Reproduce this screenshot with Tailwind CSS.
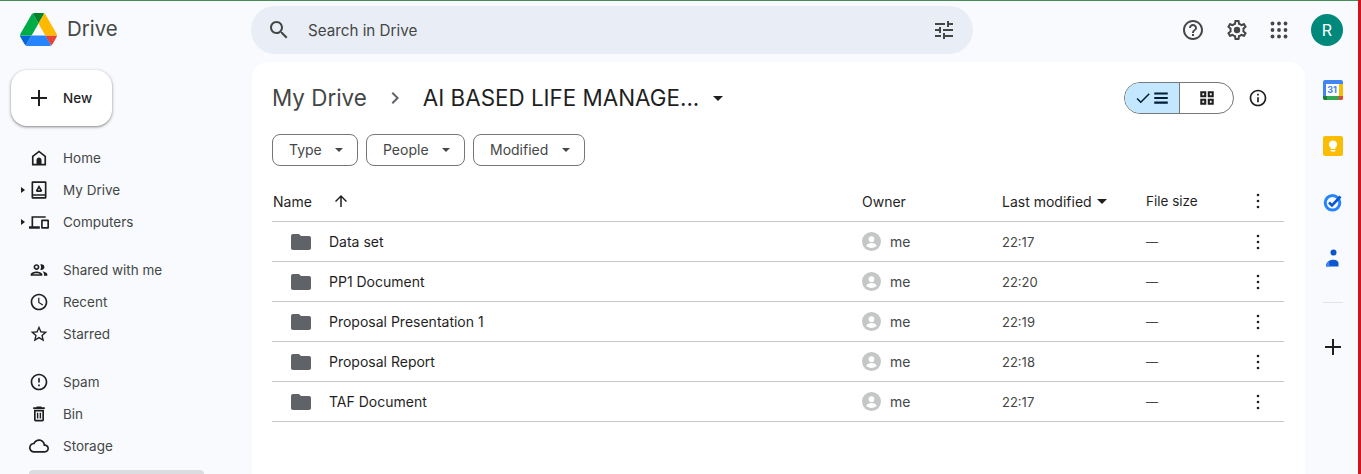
<!DOCTYPE html>
<html lang="en">
<head>
    <meta charset="UTF-8">
    <title>My Drive - Google Drive</title>
    <script src="https://cdn.jsdelivr.net/npm/@tailwindcss/browser@4"></script>
</head>
<body class="w-[1361px] h-[474px] overflow-hidden bg-[#f8fafd] font-[Inter,sans-serif] text-sm text-[#444746]">
    <!-- top green line -->
    <div class="h-px bg-[#4a8a5a]"></div>

    <div class="flex h-[473px]">
        <!-- left sidebar -->
        <aside class="w-[252px] shrink-0 text-[13.5px]">
            <div class="flex items-center h-[33px] mt-3 ml-5">
                <svg class="w-[37px] h-[33px]" viewBox="0 0 87.3 78">
                    <path d="m6.6 66.85 3.85 6.65c.8 1.4 1.95 2.5 3.3 3.3l13.75-23.8h-27.5c0 1.55.4 3.1 1.2 4.5z" fill="#0066da"/>
                    <path d="m43.65 25-13.75-23.8c-1.35.8-2.5 1.9-3.3 3.3l-25.4 44a9.06 9.06 0 0 0 -1.2 4.5h27.5z" fill="#00ac47"/>
                    <path d="m73.55 76.8c1.35-.8 2.5-1.9 3.3-3.3l1.6-2.75 7.65-13.25c.8-1.4 1.2-2.95 1.2-4.5h-27.502l5.852 11.5z" fill="#ea4335"/>
                    <path d="m43.65 25 13.75-23.8c-1.35-.8-2.9-1.2-4.5-1.2h-18.5c-1.6 0-3.15.45-4.5 1.2z" fill="#00832d"/>
                    <path d="m59.8 53h-32.3l-13.75 23.8c1.35.8 2.9 1.2 4.5 1.2h50.8c1.6 0 3.15-.45 4.5-1.2z" fill="#2684fc"/>
                    <path d="m73.4 26.5-12.7-22c-.8-1.4-1.95-2.5-3.3-3.3l-13.75 23.8 16.15 28h27.45c0-1.55-.4-3.1-1.2-4.5z" fill="#ffba00"/>
                </svg>
                <span class="ml-[10px] text-[20.4px] leading-none text-[#444746]">Drive</span>
            </div>

            <button class="flex items-center w-[101px] h-14 mt-6 ml-[11px] rounded-2xl bg-white shadow-[0_1px_3px_1px_rgba(0,0,0,0.15),0_1px_2px_rgba(0,0,0,0.3)]">
                <svg class="w-6 h-6 ml-4 fill-[#1f1f1f]" viewBox="0 0 24 24"><path d="M20 13h-7v7h-2v-7H4v-2h7V4h2v7h7v2z"/></svg>
                <span class="ml-3 pt-[2px] font-medium text-[#1f1f1f]">New</span>
            </button>

            <nav class="mt-4 ml-5 [&>div>span:last-child]:pt-[2px]">
                <div class="flex items-center h-8">
                    <span class="w-[9px]"></span>
                    <svg class="w-5 h-5 mr-[14px] fill-[#1f1f1f]" viewBox="0 0 24 24"><path d="M12 3 3.500 9.500V21h17V9.500L12 3zm6.500 16H15v-4.500c0-1.700-1.300-3-3-3s-3 1.300-3 3V19H5.500v-8.500L12 5.500l6.500 5V19z"/></svg>
                    <span>Home</span>
                </div>
                <div class="flex items-center h-8">
                    <span class="w-[9px]"><span class="block w-0 h-0 ml-px border-y-[3.500px] border-y-transparent border-l-[4px] border-l-[#1f1f1f]"></span></span>
                    <svg class="w-5 h-5 mr-[14px] fill-[#1f1f1f]" viewBox="0 0 24 24"><path d="M4.500 1.500h15c.8 0 1.500.7 1.500 1.500v18c0 .8-.7 1.500-1.500 1.500h-15C3.700 22.500 3 21.800 3 21V3c0-.8.7-1.500 1.500-1.500zM5 3.500V17h14V3.500H5zM5 19v1.500h14V19H5z"/><path d="m12 6 3.800 6.500-1 2H9.200l-1-2L12 6zm0 4-1.200 2.300h2.400L12 10z"/></svg>
                    <span>My Drive</span>
                </div>
                <div class="flex items-center h-8">
                    <span class="w-[9px]"><span class="block w-0 h-0 ml-px border-y-[3.500px] border-y-transparent border-l-[4px] border-l-[#1f1f1f]"></span></span>
                    <svg class="w-5 h-5 mr-[14px] fill-[#1f1f1f]" viewBox="0 0 24 24"><path d="M3 5h17v2H5v10h8v3H0v-3h3V5z"/><path d="M16 9h6.500c.8 0 1.500.7 1.500 1.500v8c0 .8-.7 1.500-1.500 1.500H16c-.8 0-1.500-.7-1.500-1.500v-8c0-.8.7-1.500 1.500-1.500zm.5 2v7H22v-7h-5.500z"/></svg>
                    <span>Computers</span>
                </div>

                <div class="flex items-center h-8 mt-4">
                    <span class="w-[9px]"></span>
                    <svg class="w-5 h-5 mr-[14px] fill-[#1f1f1f]" viewBox="0 0 24 24"><path d="M9 13.750c-2.340 0-7 1.170-7 3.500V19h14v-1.750c0-2.330-4.660-3.500-7-3.500zM4.340 17c.84-.58 2.870-1.250 4.660-1.250s3.820.67 4.660 1.250H4.340zM9 12c1.930 0 3.500-1.570 3.500-3.500S10.930 5 9 5 5.500 6.570 5.500 8.500 7.070 12 9 12zm0-5c.83 0 1.500.67 1.500 1.500S9.830 10 9 10s-1.500-.67-1.500-1.500S8.170 7 9 7zm7.040 6.810c1.160.84 1.960 1.960 1.960 3.440V19h4v-1.750c0-2.020-3.500-3.170-5.960-3.440zM15 12c1.930 0 3.500-1.570 3.500-3.500S16.930 5 15 5c-.54 0-1.040.13-1.500.35.630.89 1 1.980 1 3.150s-.37 2.260-1 3.150c.46.220.96.350 1.500.350z"/></svg>
                    <span>Shared with me</span>
                </div>
                <div class="flex items-center h-8">
                    <span class="w-[9px]"></span>
                    <svg class="w-5 h-5 mr-[14px] fill-[#1f1f1f]" viewBox="0 0 24 24"><path d="M11.990 2C6.470 2 2 6.480 2 12s4.470 10 9.990 10C17.520 22 22 17.520 22 12S17.520 2 11.990 2zM12 20c-4.420 0-8-3.580-8-8s3.580-8 8-8 8 3.580 8 8-3.580 8-8 8zm.500-13H11v6l5.250 3.150.750-1.230-4.500-2.670z"/></svg>
                    <span>Recent</span>
                </div>
                <div class="flex items-center h-8">
                    <span class="w-[9px]"></span>
                    <svg class="w-5 h-5 mr-[14px] fill-[#1f1f1f]" viewBox="0 0 24 24"><path d="M22 9.240l-7.190-.62L12 2 9.190 8.630 2 9.240l5.460 4.730L5.820 21 12 17.270 18.180 21l-1.630-7.030L22 9.240zM12 15.400l-3.760 2.270 1-4.280-3.320-2.880 4.380-.38L12 6.100l1.710 4.040 4.380.38-3.320 2.880 1 4.280L12 15.400z"/></svg>
                    <span>Starred</span>
                </div>

                <div class="flex items-center h-8 mt-4">
                    <span class="w-[9px]"></span>
                    <svg class="w-5 h-5 mr-[14px] fill-[#1f1f1f]" viewBox="0 0 24 24"><path d="M12 7c.55 0 1 .45 1 1v4c0 .55-.45 1-1 1s-1-.45-1-1V8c0-.55.45-1 1-1zm-.01-5C6.470 2 2 6.480 2 12s4.470 10 9.990 10C17.520 22 22 17.520 22 12S17.520 2 11.990 2zM12 20c-4.420 0-8-3.580-8-8s3.580-8 8-8 8 3.580 8 8-3.580 8-8 8zm1-3h-2v-2h2v2z"/></svg>
                    <span>Spam</span>
                </div>
                <div class="flex items-center h-8">
                    <span class="w-[9px]"></span>
                    <svg class="w-5 h-5 mr-[14px] fill-[#1f1f1f]" viewBox="0 0 24 24"><path d="M6 19c0 1.100.9 2 2 2h8c1.100 0 2-.9 2-2V7H6v12zM8 9h8v10H8V9zm7.500-5l-1-1h-5l-1 1H5v2h14V4z"/><path d="M9.500 10.500h1.700v7H9.500zM12.800 10.500h1.700v7h-1.700z"/></svg>
                    <span>Bin</span>
                </div>
                <div class="flex items-center h-8">
                    <span class="w-[9px]"></span>
                    <svg class="w-5 h-5 mr-[14px] fill-[#1f1f1f]" viewBox="0 0 24 24"><path d="M19.350 10.040C18.670 6.590 15.640 4 12 4 9.110 4 6.600 5.640 5.350 8.040 2.340 8.360 0 10.910 0 14c0 3.310 2.690 6 6 6h13c2.760 0 5-2.240 5-5 0-2.640-2.050-4.780-4.650-4.960zM19 18H6c-2.210 0-4-1.790-4-4s1.790-4 4-4h.71C7.370 7.690 9.480 6 12 6c3.040 0 5.500 2.460 5.500 5.500v.5H19c1.660 0 3 1.340 3 3s-1.340 3-3 3z"/></svg>
                    <span>Storage</span>
                </div>
            </nav>
            <div class="w-[175px] h-2 mt-2 ml-[29px] rounded bg-[#dadce0]"></div>
        </aside>

        <!-- header + content -->
        <div class="w-[1106px] shrink-0">
            <header class="flex items-center h-[61px] pb-[8px] pt-[5px]">
                <div class="flex items-center w-[722px] h-12 -ml-px rounded-full bg-[#e9eef6]">
                    <svg class="w-6 h-6 ml-4 fill-[#444746]" viewBox="0 0 24 24"><path d="M15.500 14h-.79l-.28-.27C15.410 12.590 16 11.110 16 9.500 16 5.910 13.090 3 9.500 3S3 5.910 3 9.500 5.910 16 9.500 16c1.610 0 3.090-.59 4.230-1.570l.27.28v.79l5 4.990L20.490 19l-4.990-5zm-6 0C7.010 14 5 11.990 5 9.500S7.010 5 9.500 5 14 7.010 14 9.500 11.990 14 9.500 14z"/></svg>
                    <span class="ml-[17px] pt-[2px] text-[15.2px] text-[#444746]">Search in Drive</span>
                    <svg class="w-6 h-6 ml-auto mr-[17px] fill-[#444746]" viewBox="0 0 24 24"><path d="M3 17v2h6v-2H3zM3 5v2h10V5H3zm10 16v-2h8v-2h-8v-2h-2v6h2zM7 9v2H3v2h4v2h2V9H7zm14 4v-2H11v2h10zm-6-4h2V7h4V5h-4V3h-2v6z"/></svg>
                </div>
                <svg class="w-6 h-6 ml-[208px] fill-[#444746]" viewBox="0 0 24 24"><path d="M11 18h2v-2h-2v2zm1-16C6.480 2 2 6.480 2 12s4.480 10 10 10 10-4.480 10-10S17.520 2 12 2zm0 18c-4.410 0-8-3.590-8-8s3.590-8 8-8 8 3.590 8 8-3.590 8-8 8zm0-14c-2.210 0-4 1.790-4 4h2c0-1.100.9-2 2-2s2 .9 2 2c0 2-3 1.750-3 5h2c0-2.250 3-2.500 3-5 0-2.210-1.790-4-4-4z"/></svg>
                <svg class="w-6 h-6 ml-5 fill-[#444746]" viewBox="0 0 24 24"><path d="M19.430 12.980c.04-.32.07-.64.07-.98 0-.34-.03-.66-.07-.98l2.110-1.650c.19-.15.24-.42.12-.64l-2-3.460c-.09-.16-.26-.25-.44-.25-.06 0-.12.01-.17.03l-2.490 1c-.52-.4-1.080-.73-1.690-.98l-.38-2.650C14.460 2.180 14.250 2 14 2h-4c-.25 0-.46.18-.49.42l-.38 2.650c-.61.25-1.170.59-1.690.98l-2.490-1c-.06-.02-.12-.03-.18-.03-.17 0-.34.09-.43.25l-2 3.460c-.13.22-.07.49.12.64l2.110 1.650c-.04.32-.07.65-.07.98 0 .33.03.66.07.98l-2.110 1.650c-.19.15-.24.42-.12.64l2 3.460c.09.16.26.25.44.25.06 0 .12-.01.17-.03l2.490-1c.52.4 1.080.73 1.690.98l.38 2.650c.03.24.24.42.49.42h4c.25 0 .46-.18.49-.42l.38-2.650c.61-.25 1.170-.59 1.690-.98l2.490 1c.06.02.12.03.18.03.17 0 .34-.09.43-.25l2-3.460c.12-.22.07-.49-.12-.64l-2.110-1.650zm-1.980-1.710c.04.31.05.52.05.73 0 .21-.02.43-.05.73l-.14 1.130.89.7 1.080.84-.7 1.210-1.270-.51-1.040-.42-.9.68c-.43.32-.84.56-1.250.73l-1.060.43-.16 1.130-.2 1.350h-1.400l-.19-1.350-.16-1.130-1.060-.43c-.43-.18-.83-.41-1.230-.71l-.91-.7-1.060.43-1.270.51-.7-1.210 1.080-.84.89-.7-.14-1.130c-.03-.31-.05-.54-.05-.74s.02-.43.05-.73l.14-1.130-.89-.7-1.080-.84.7-1.210 1.270.51 1.040.42.9-.68c.43-.32.84-.56 1.250-.73l1.060-.43.16-1.130.2-1.350h1.390l.19 1.350.16 1.130 1.060.43c.43.18.83.41 1.230.71l.91.7 1.060-.43 1.270-.51.7 1.210-1.070.85-.89.7.14 1.130z"/><circle cx="12" cy="12" r="3.200"/></svg>
                <svg class="w-6 h-6 ml-[18px] fill-[#444746]" viewBox="0 0 24 24"><circle cx="5.500" cy="5.500" r="1.900"/><circle cx="12" cy="5.500" r="1.900"/><circle cx="18.500" cy="5.500" r="1.900"/><circle cx="5.500" cy="12" r="1.900"/><circle cx="12" cy="12" r="1.900"/><circle cx="18.500" cy="12" r="1.900"/><circle cx="5.500" cy="18.500" r="1.900"/><circle cx="12" cy="18.500" r="1.900"/><circle cx="18.500" cy="18.500" r="1.900"/></svg>
                <div class="flex items-center justify-center w-8 h-8 ml-5 rounded-full bg-[#00897b] text-white text-base">R</div>
            </header>

            <div class="flex h-[412px]">
                <!-- main card -->
                <main class="w-[1053px] shrink-0 px-5 rounded-t-2xl bg-white">
                    <div class="flex items-center h-[72px]">
                        <span class="text-[22.4px] text-[#444746]">My Drive</span>
                        <svg class="w-6 h-6 ml-4 fill-[#5f6368]" viewBox="0 0 24 24"><path d="M10 6 8.590 7.410 13.170 12l-4.580 4.590L10 18l6-6z"/></svg>
                        <span class="ml-4 text-[22.4px] text-[#1f1f1f]">AI BASED LIFE MANAGE...</span>
                        <span class="ml-[14px] w-0 h-0 border-x-[5px] border-x-transparent border-t-[5px] border-t-[#1f1f1f]"></span>
                        <div class="flex ml-auto h-8 w-[110px] rounded-full border border-[#747775] overflow-hidden">
                            <div class="flex items-center justify-center w-[55px] bg-[#c2e7ff] border-r border-[#747775]">
                                <svg class="w-[18px] h-[18px] fill-[#001d35]" viewBox="0 0 24 24"><path d="M9 16.170 4.830 12l-1.420 1.410L9 19 21 7l-1.410-1.410z"/></svg>
                                <svg class="w-[18px] h-[18px] fill-[#001d35]" viewBox="0 0 24 24"><path d="M3 4.500h18v2.800H3zM3 10.600h18v2.800H3zM3 16.700h18v2.800H3z"/></svg>
                            </div>
                            <div class="flex items-center justify-center flex-1">
                                <svg class="w-[18px] h-[18px] fill-[#1f1f1f]" viewBox="0 0 24 24"><path fill-rule="evenodd" d="M3 3h8v8H3zm2.800 2.800v2.400h2.400V5.800zM13 3h8v8h-8zm2.800 2.800v2.400h2.400V5.800zM3 13h8v8H3zm2.800 2.800v2.400h2.400v-2.400zM13 13h8v8h-8zm2.800 2.800v2.400h2.400v-2.400z"/></svg>
                            </div>
                        </div>
                        <svg class="w-5 h-5 ml-[14px] mr-[17px] fill-[#1f1f1f]" viewBox="0 0 24 24"><path d="M11 7h2v2h-2zm0 4h2v6h-2zm1-9C6.480 2 2 6.480 2 12s4.480 10 10 10 10-4.480 10-10S17.520 2 12 2zm0 18c-4.410 0-8-3.590-8-8s3.590-8 8-8 8 3.590 8 8-3.590 8-8 8z"/></svg>
                    </div>

                    <div class="flex gap-2">
                        <button class="flex items-center justify-between w-[86px] h-8 pl-4 pr-[14px] rounded-lg border border-[#747775]">Type<span class="w-0 h-0 border-x-[4px] border-x-transparent border-t-[4px] border-t-[#444746]"></span></button>
                        <button class="flex items-center justify-between w-[99px] h-8 pl-4 pr-[14px] rounded-lg border border-[#747775]">People<span class="w-0 h-0 border-x-[4px] border-x-transparent border-t-[4px] border-t-[#444746]"></span></button>
                        <button class="flex items-center justify-between w-[112px] h-8 pl-4 pr-[14px] rounded-lg border border-[#747775]">Modified<span class="w-0 h-0 border-x-[4px] border-x-transparent border-t-[4px] border-t-[#444746]"></span></button>
                    </div>

                    <!-- file table -->
                    <div class="mt-4 w-[1012px]">
                        <div class="grid grid-cols-[590px_140px_144px_100px_38px] items-center h-10 border-b border-[#c7c7c7] text-[#1f1f1f]">
                            <div class="flex items-center pl-px">Name
                                <svg class="w-[18px] h-[18px] ml-5 -mt-[2px] fill-[#1f1f1f]" viewBox="0 0 24 24"><path d="M4 12l1.410 1.410L11 7.830V20h2V7.830l5.580 5.590L20 12l-8-8-8 8z"/></svg>
                            </div>
                            <div>Owner</div>
                            <div class="flex items-center">Last modified<span class="ml-[5px] w-0 h-0 border-x-[5px] border-x-transparent border-t-[5px] border-t-[#1f1f1f]"></span></div>
                            <div class="text-[13.5px]">File size</div>
                            <svg class="w-6 h-6 -mt-[1px] fill-[#1f1f1f]" viewBox="0 0 24 24"><circle cx="12" cy="6" r="1.300"/><circle cx="12" cy="12" r="1.300"/><circle cx="12" cy="18" r="1.300"/></svg>
                        </div>

                        <div class="grid grid-cols-[590px_140px_144px_100px_38px] items-center h-10 border-b border-[#c7c7c7]">
                            <div class="flex items-center pl-[17px] gap-4 text-[#1f1f1f]">
                                <svg class="w-6 h-6 fill-[#5f6368]" viewBox="0 0 24 24"><path d="M10 4H4c-1.100 0-1.990.9-1.990 2L2 18c0 1.100.9 2 2 2h16c1.100 0 2-.9 2-2V8c0-1.100-.9-2-2-2h-8l-2-2z"/></svg>
                                Data set
                            </div>
                            <div class="flex items-center gap-[9px]">
                                <svg class="w-[19px] h-[19px]" viewBox="0 0 20 20"><circle cx="10" cy="10" r="10" fill="#c4c7c5"/><circle cx="10" cy="7.500" r="3" fill="#fff"/><path d="M4.500 14.500c.8-2.200 3-3 5.500-3s4.700.8 5.500 3c-1.300 1.400-3.300 2.300-5.500 2.300s-4.200-.9-5.500-2.300z" fill="#fff"/></svg>
                                me
                            </div>
                            <div class="pt-[2px] text-[13px]">22:17</div>
                            <div class="text-xs">—</div>
                            <svg class="w-6 h-6 fill-[#1f1f1f]" viewBox="0 0 24 24"><circle cx="12" cy="6" r="1.300"/><circle cx="12" cy="12" r="1.300"/><circle cx="12" cy="18" r="1.300"/></svg>
                        </div>
                        <div class="grid grid-cols-[590px_140px_144px_100px_38px] items-center h-10 border-b border-[#c7c7c7]">
                            <div class="flex items-center pl-[17px] gap-4 text-[#1f1f1f]">
                                <svg class="w-6 h-6 fill-[#5f6368]" viewBox="0 0 24 24"><path d="M10 4H4c-1.100 0-1.990.9-1.990 2L2 18c0 1.100.9 2 2 2h16c1.100 0 2-.9 2-2V8c0-1.100-.9-2-2-2h-8l-2-2z"/></svg>
                                PP1 Document
                            </div>
                            <div class="flex items-center gap-[9px]">
                                <svg class="w-[19px] h-[19px]" viewBox="0 0 20 20"><circle cx="10" cy="10" r="10" fill="#c4c7c5"/><circle cx="10" cy="7.500" r="3" fill="#fff"/><path d="M4.500 14.500c.8-2.200 3-3 5.500-3s4.700.8 5.500 3c-1.300 1.400-3.300 2.300-5.500 2.300s-4.200-.9-5.500-2.300z" fill="#fff"/></svg>
                                me
                            </div>
                            <div class="pt-[2px] text-[13px]">22:20</div>
                            <div class="text-xs">—</div>
                            <svg class="w-6 h-6 fill-[#1f1f1f]" viewBox="0 0 24 24"><circle cx="12" cy="6" r="1.300"/><circle cx="12" cy="12" r="1.300"/><circle cx="12" cy="18" r="1.300"/></svg>
                        </div>
                        <div class="grid grid-cols-[590px_140px_144px_100px_38px] items-center h-10 border-b border-[#c7c7c7]">
                            <div class="flex items-center pl-[17px] gap-4 text-[#1f1f1f]">
                                <svg class="w-6 h-6 fill-[#5f6368]" viewBox="0 0 24 24"><path d="M10 4H4c-1.100 0-1.990.9-1.990 2L2 18c0 1.100.9 2 2 2h16c1.100 0 2-.9 2-2V8c0-1.100-.9-2-2-2h-8l-2-2z"/></svg>
                                Proposal Presentation 1
                            </div>
                            <div class="flex items-center gap-[9px]">
                                <svg class="w-[19px] h-[19px]" viewBox="0 0 20 20"><circle cx="10" cy="10" r="10" fill="#c4c7c5"/><circle cx="10" cy="7.500" r="3" fill="#fff"/><path d="M4.500 14.500c.8-2.200 3-3 5.500-3s4.700.8 5.500 3c-1.300 1.400-3.300 2.300-5.500 2.300s-4.200-.9-5.500-2.300z" fill="#fff"/></svg>
                                me
                            </div>
                            <div class="pt-[2px] text-[13px]">22:19</div>
                            <div class="text-xs">—</div>
                            <svg class="w-6 h-6 fill-[#1f1f1f]" viewBox="0 0 24 24"><circle cx="12" cy="6" r="1.300"/><circle cx="12" cy="12" r="1.300"/><circle cx="12" cy="18" r="1.300"/></svg>
                        </div>
                        <div class="grid grid-cols-[590px_140px_144px_100px_38px] items-center h-10 border-b border-[#c7c7c7]">
                            <div class="flex items-center pl-[17px] gap-4 text-[#1f1f1f]">
                                <svg class="w-6 h-6 fill-[#5f6368]" viewBox="0 0 24 24"><path d="M10 4H4c-1.100 0-1.990.9-1.990 2L2 18c0 1.100.9 2 2 2h16c1.100 0 2-.9 2-2V8c0-1.100-.9-2-2-2h-8l-2-2z"/></svg>
                                Proposal Report
                            </div>
                            <div class="flex items-center gap-[9px]">
                                <svg class="w-[19px] h-[19px]" viewBox="0 0 20 20"><circle cx="10" cy="10" r="10" fill="#c4c7c5"/><circle cx="10" cy="7.500" r="3" fill="#fff"/><path d="M4.500 14.500c.8-2.200 3-3 5.500-3s4.700.8 5.500 3c-1.300 1.400-3.300 2.300-5.500 2.300s-4.200-.9-5.500-2.300z" fill="#fff"/></svg>
                                me
                            </div>
                            <div class="pt-[2px] text-[13px]">22:18</div>
                            <div class="text-xs">—</div>
                            <svg class="w-6 h-6 fill-[#1f1f1f]" viewBox="0 0 24 24"><circle cx="12" cy="6" r="1.300"/><circle cx="12" cy="12" r="1.300"/><circle cx="12" cy="18" r="1.300"/></svg>
                        </div>
                        <div class="grid grid-cols-[590px_140px_144px_100px_38px] items-center h-10 border-b border-[#c7c7c7]">
                            <div class="flex items-center pl-[17px] gap-4 text-[#1f1f1f]">
                                <svg class="w-6 h-6 fill-[#5f6368]" viewBox="0 0 24 24"><path d="M10 4H4c-1.100 0-1.990.9-1.990 2L2 18c0 1.100.9 2 2 2h16c1.100 0 2-.9 2-2V8c0-1.100-.9-2-2-2h-8l-2-2z"/></svg>
                                TAF Document
                            </div>
                            <div class="flex items-center gap-[9px]">
                                <svg class="w-[19px] h-[19px]" viewBox="0 0 20 20"><circle cx="10" cy="10" r="10" fill="#c4c7c5"/><circle cx="10" cy="7.500" r="3" fill="#fff"/><path d="M4.500 14.500c.8-2.200 3-3 5.500-3s4.700.8 5.500 3c-1.300 1.400-3.300 2.300-5.500 2.300s-4.200-.9-5.500-2.300z" fill="#fff"/></svg>
                                me
                            </div>
                            <div class="pt-[2px] text-[13px]">22:17</div>
                            <div class="text-xs">—</div>
                            <svg class="w-6 h-6 fill-[#1f1f1f]" viewBox="0 0 24 24"><circle cx="12" cy="6" r="1.300"/><circle cx="12" cy="12" r="1.300"/><circle cx="12" cy="18" r="1.300"/></svg>
                        </div>
                    </div>
                </main>

                <!-- side apps -->
                <div class="relative w-[53px] shrink-0 flex flex-col items-center pt-[18px] pl-[2px]">
                    <div class="relative w-5 h-5 rounded-[2px] overflow-hidden bg-[#4285f4]">
                        <div class="absolute left-[3px] top-[4px] w-[13px] h-[12px] bg-white text-[#4285f4] text-[9px] leading-[12px] font-bold text-center">31</div>
                        <div class="absolute right-0 top-[4px] w-[4px] h-[16px] bg-[#fbbc04]"></div>
                        <div class="absolute left-[4px] bottom-0 w-[13px] h-[4px] bg-[#34a853]"></div>
                        <div class="absolute left-0 bottom-0 w-[4px] h-[4px] bg-[#188038]"></div>
                        <div class="absolute right-0 bottom-0 w-[4px] h-[4px] bg-[#ea4335]"></div>
                    </div>
                    <svg class="w-5 h-5 mt-9" viewBox="0 0 20 20"><rect width="20" height="20" rx="2" fill="#fbbc04"/><path d="M10 4.500a4 4 0 0 0-2.300 7.300V13h4.600v-1.200A4 4 0 0 0 10 4.500z" fill="#fff"/><rect x="7.700" y="14" width="4.600" height="1.500" fill="#fff"/></svg>
                    <svg class="w-5 h-5 mt-9" viewBox="0 0 20 20"><circle cx="9.500" cy="10.800" r="7.300" fill="none" stroke="#2684fc" stroke-width="3"/><path d="m6 10.500 3 3 8.500-9" fill="none" stroke="#0b57d0" stroke-width="2.600"/></svg>
                    <svg class="w-5 h-5 mt-9" viewBox="0 0 20 20"><circle cx="10.500" cy="4.500" r="3" fill="#0b57d0"/><path d="M3 18.500c0-2.500 1-4.200 3-5.500 1-.7 2.800-1.200 4.500-1.200 2.500 0 4.500 1.200 5 3v3.700H3z" fill="#0b57d0"/><path d="M3 18.500c0-2.500 1-4.200 3-5.500l.5 5.500H3z" fill="#4285f4"/></svg>
                    <div class="w-5 h-px mt-[34px] bg-[#e3e3e3]"></div>
                    <svg class="w-6 h-6 mt-8 fill-[#1f1f1f]" viewBox="0 0 24 24"><path d="M20 13h-7v7h-2v-7H4v-2h7V4h2v7h7v2z"/></svg>
                </div>
            </div>
        </div>

        <!-- red strip at the window edge -->
        <div class="w-[3px] shrink-0 -mt-px h-[474px] bg-[#d0121f]"></div>
    </div>
</body>
</html>
